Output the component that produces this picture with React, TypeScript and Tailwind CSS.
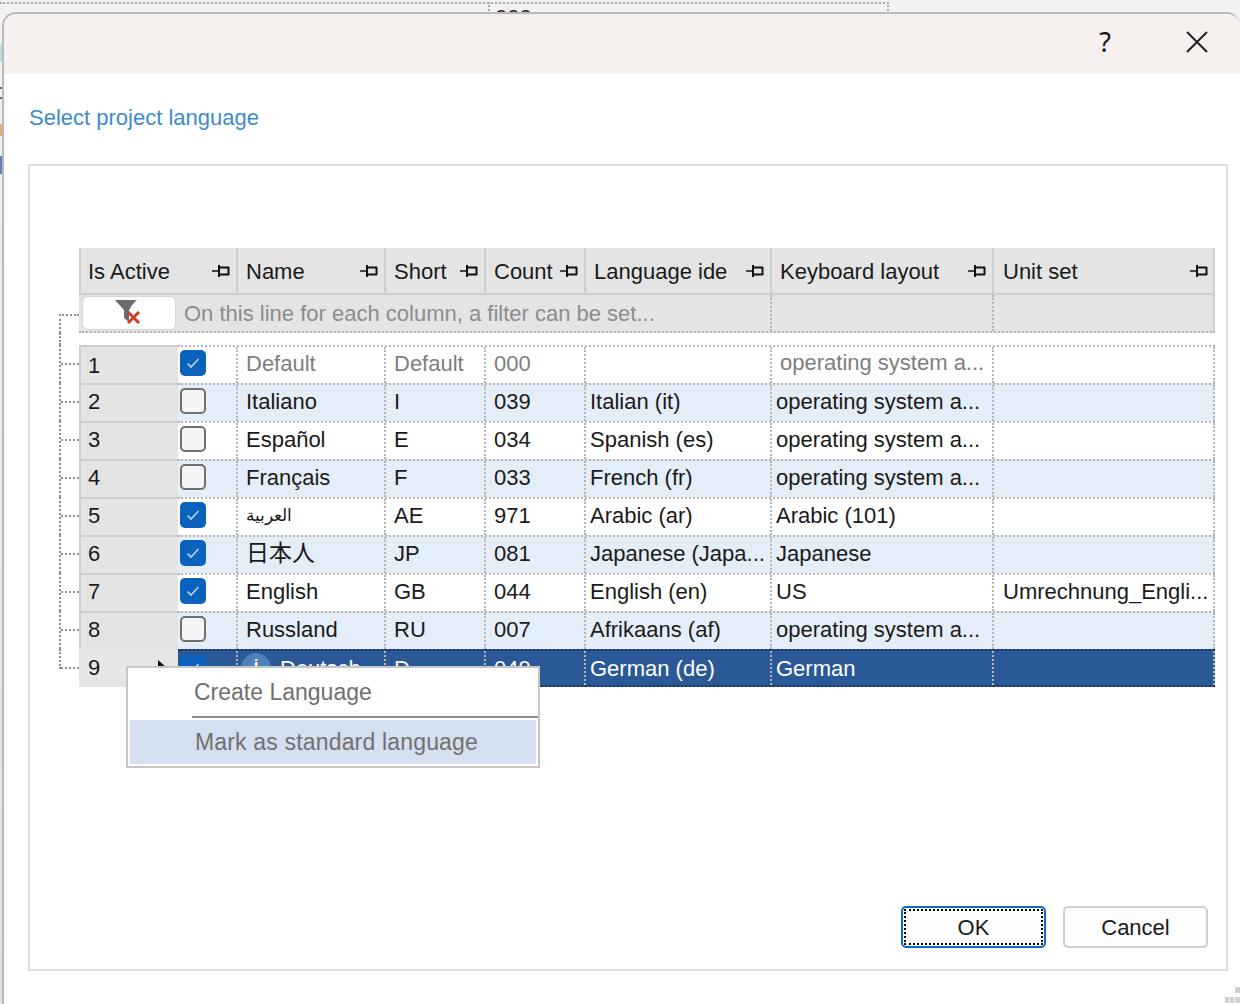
const columns = [
  { label: "Name", width: "w-[148px]", pad: "pl-[8px] pr-[6px]" },
  { label: "Short", width: "w-[100px]", pad: "pl-[8px] pr-[6px]" },
  { label: "Count", width: "w-[100px]", pad: "pl-[8px] pr-[6px]" },
  { label: "Language ide", width: "w-[186px]", pad: "pl-[8px] pr-[6px]" },
  { label: "Keyboard layout", width: "w-[222px]", pad: "pl-[8px] pr-[6px]" },
  { label: "Unit set", width: "w-[221px]", pad: "pl-[9px] pr-[5px]" },
];

const rows = [
  { id: 1, active: true, name: "Default", nameSize: "", short: "Default", count: "000", lang: "", kb: "operating system a...", unit: "", muted: true },
  { id: 2, active: false, name: "Italiano", nameSize: "", short: "I", count: "039", lang: "Italian (it)", kb: "operating system a...", unit: "" },
  { id: 3, active: false, name: "Español", nameSize: "", short: "E", count: "034", lang: "Spanish (es)", kb: "operating system a...", unit: "" },
  { id: 4, active: false, name: "Français", nameSize: "", short: "F", count: "033", lang: "French (fr)", kb: "operating system a...", unit: "" },
  { id: 5, active: true, name: "العربية", nameSize: "text-[17px]", short: "AE", count: "971", lang: "Arabic (ar)", kb: "Arabic (101)", unit: "" },
  { id: 6, active: true, name: "日本人", nameSize: "text-[23px]", short: "JP", count: "081", lang: "Japanese (Japa...", kb: "Japanese", unit: "" },
  { id: 7, active: true, name: "English", nameSize: "", short: "GB", count: "044", lang: "English (en)", kb: "US", unit: "Umrechnung_Engli..." },
  { id: 8, active: false, name: "Russland", nameSize: "", short: "RU", count: "007", lang: "Afrikaans (af)", kb: "operating system a...", unit: "" },
];

function Pin() {
  return (
    <svg width="18" height="12" viewBox="0 0 18 12" className="shrink-0">
      <path d="M0 6H6" stroke="#111" strokeWidth="1.5" fill="none" />
      <path d="M7 0V12M16.5 2V10" stroke="#111" strokeWidth="2" fill="none" />
      <path d="M7 2.5H17M7 9.5H17" stroke="#111" strokeWidth="2" fill="none" />
    </svg>
  );
}

function Check({ on }: { on: boolean }) {
  if (!on) {
    return <div className="w-[26px] h-[26px] rounded-[5px] border-2 border-[#707070] bg-[#f5f5f5]" />;
  }
  return (
    <div className="w-[26px] h-[26px] rounded-[5px] bg-[#0a62bd] flex items-center justify-center">
      <svg width="14" height="12" viewBox="0 0 14 12">
        <path d="M1.5 6.5L5 10L12.5 2" stroke="#b9d3ef" strokeWidth="1.6" fill="none" />
      </svg>
    </div>
  );
}

function Stub({ last }: { last?: boolean }) {
  return (
    <div className={`w-[20px] shrink-0 border-l-2 border-dotted border-[#8f8f8f] ${last ? "h-[20px] self-start" : "self-stretch"}`}>
      <div className="h-[20px] border-b-2 border-dotted border-[#8f8f8f]" />
    </div>
  );
}

function Cell({ width, className, children }: { width: string; className: string; children?: React.ReactNode }) {
  return (
    <div className={`${width} shrink-0 h-full border-r-2 border-dotted border-[#b5b5b5] flex items-center whitespace-nowrap overflow-hidden ${className}`}>
      {children}
    </div>
  );
}

export default function App() {
  return (
    <div className="relative w-[1240px] h-[1004px] overflow-hidden bg-linear-to-b from-[#f2f2f2] to-[#e2e2e2] pt-[12px] pl-[2px] font-['Liberation_Sans',sans-serif] text-[22px] text-[#1a1a1a]">
      {/* what is left of the window behind the dialog */}
      <div className="absolute left-0 top-[2px] w-[889px] h-[12px] border-t-2 border-r-2 border-dotted border-[#a8a8a8]" />
      <div className="absolute left-[488px] top-[2px] h-[12px] border-l-2 border-dotted border-[#a8a8a8]" />
      <div className="absolute left-[495px] top-[7px] leading-[22px]">000</div>
      <div className="absolute left-0 top-[44px] w-[2px] h-[18px] bg-[#b6e0e0]" />
      <div className="absolute left-0 top-[87px] w-[2px] h-[2px] bg-[#666666]" />
      <div className="absolute left-0 top-[97px] w-[2px] h-[2px] bg-[#666666]" />
      <div className="absolute left-0 top-[124px] w-[2px] h-[12px] bg-[#e3b07a]" />
      <div className="absolute left-0 top-[156px] w-[2px] h-[18px] bg-[#5f7fb5]" />

      <div className="relative h-[992px] w-[1238px] rounded-t-[14px] border-t-2 border-l-2 border-[#b9b9b9] bg-white flex flex-col overflow-hidden">
        <div className="h-[60px] shrink-0 pb-[4px] bg-[#f6f0ef] flex items-center justify-end">
          <span className="mr-[75px] font-['Noto_Sans',sans-serif] text-[27px] text-[#111]">?</span>
          <svg width="22" height="22" viewBox="0 0 22 22" className="mr-[32px]">
            <path d="M1 1L21 21M21 1L1 21" stroke="#222" strokeWidth="2" />
          </svg>
        </div>

        <div className="pl-[25px] pt-[28px] h-[90px] shrink-0 text-[#3f8bc9] leading-[32px]">Select project language</div>

        <div className="ml-[24px] w-[1200px] h-[807px] border-2 border-[#dedede] pt-[82px]">
          <div className="flex ml-[49px]">
            <div className="w-[159px] h-[47px] bg-[#e4e4e4] border-r-2 border-b-2 border-l-2 border-[#cfcfcf] flex items-center justify-between pl-[7px] pr-[6px] pt-[1px]">
              Is Active <Pin />
            </div>
            {columns.map((c) => (
              <div key={c.label} className={`${c.width} ${c.pad} h-[47px] bg-[#e4e4e4] border-r-2 border-b-2 border-[#cfcfcf] flex items-center justify-between pt-[1px] whitespace-nowrap`}>
                {c.label} <Pin />
              </div>
            ))}
          </div>

          <div className="flex ml-[29px]">
            <div className="w-[20px] shrink-0 mt-[19px] border-l-2 border-t-2 border-dotted border-[#8f8f8f]" />
            <div className="flex h-[38px] bg-[#e4e4e4] border-b-2 border-dotted border-[#b5b5b5]">
              <div className="w-[99px] pl-[3px] pr-[2px] py-[1px] shrink-0">
                <div className="h-[34px] rounded-[6px] border border-[#d6d6d6] bg-white flex items-center justify-center">
                  <svg width="28" height="26" viewBox="0 0 28 26" className="mb-[2px] ml-[-2px]">
                    <path d="M1 1H23L15 11V23L10 19V11Z" fill="#6b6b6b" />
                    <path d="M17 9L23 2" stroke="#fff" strokeWidth="2" />
                    <path d="M14 13L25 24M25 13L14 24" stroke="#d23a2c" strokeWidth="3" />
                  </svg>
                </div>
              </div>
              <div className="w-[594px] shrink-0 border-r-2 border-dotted border-[#b5b5b5] pl-[6px] flex items-center text-[#8c8c8c] whitespace-nowrap">
                On this line for each column, a filter can be set...
              </div>
              <div className="w-[222px] shrink-0 border-r-2 border-dotted border-[#b5b5b5]" />
              <div className="w-[221px] shrink-0 border-r-2 border-[#cfcfcf]" />
            </div>
          </div>

          <div className="flex ml-[29px] h-[12px]">
            <div className="border-l-2 border-dotted border-[#8f8f8f]" />
          </div>

          {rows.map((r, i) => (
            <div key={r.id} className="flex ml-[29px] h-[38px]">
              <Stub />
              <div className={`w-[99px] shrink-0 bg-[#e4e4e4] border-t-2 border-l-2 border-[#cfcfcf] pl-[7px] flex items-center ${r.muted ? "" : "pb-[3px]"}`}>{r.id}</div>
              <div className={`flex border-t-2 border-dotted border-[#b5b5b5] ${r.muted ? "text-[#7e7e7e]" : ""} ${i % 2 ? "bg-[#e3eef9]" : "bg-white"}`}>
                <div className="w-[60px] h-full shrink-0 border-r-2 border-dotted border-[#b5b5b5] pl-[2px] pb-[4px] flex items-center">
                  <Check on={r.active} />
                </div>
                <Cell width="w-[148px]" className="pl-[8px] pb-[3px]">
                  <span className={`font-['Liberation_Sans','Noto_Sans_CJK_JP',sans-serif] ${r.nameSize}`}>{r.name}</span>
                </Cell>
                <Cell width="w-[100px]" className="pl-[8px] pb-[3px]">{r.short}</Cell>
                <Cell width="w-[100px]" className="pl-[8px] pb-[3px]">{r.count}</Cell>
                <Cell width="w-[186px]" className="pl-[4px] pb-[3px]">{r.lang}</Cell>
                <Cell width="w-[222px]" className={r.muted ? "pl-[8px] pb-[5px]" : "pl-[4px] pb-[3px]"}>{r.kb}</Cell>
                <Cell width="w-[221px]" className="pl-[9px] pb-[3px]">{r.unit}</Cell>
              </div>
            </div>
          ))}

          <div className="flex ml-[29px] h-[38px]">
            <Stub last />
            <div className="w-[99px] shrink-0 bg-[#e6e6e6] pl-[9px] pb-[1px] flex items-center relative">
              9
              <svg width="8" height="13" viewBox="0 0 8 13" className="absolute left-[79px] top-[11px]">
                <path d="M0 0L8 7L0 13Z" fill="#111" />
              </svg>
            </div>
            <div className="flex bg-[#2b5997] text-white border-t-2 border-b-2 border-dotted border-[#16325a]">
              <div className="w-[60px] h-full shrink-0 border-r-2 border-dotted border-[#b5b5b5] pl-[2px] flex items-center">
                <Check on />
              </div>
              <Cell width="w-[148px]" className="pl-[3px] gap-[9px]">
                <div className="w-[30px] h-[30px] rounded-full bg-[#4f80ba] text-center text-[17px] font-bold leading-[26px]">i</div>
                Deutsch
              </Cell>
              <Cell width="w-[100px]" className="pl-[8px]">D</Cell>
              <Cell width="w-[100px]" className="pl-[8px]">049</Cell>
              <Cell width="w-[186px]" className="pl-[4px]">German (de)</Cell>
              <Cell width="w-[222px]" className="pl-[4px]">German</Cell>
              <Cell width="w-[221px]" className="pl-[9px]" />
            </div>
          </div>

          <div className="mt-[219px] flex justify-end pr-[18px] gap-[17px]">
            <button className="w-[145px] h-[42px] rounded-[5px] border-2 border-[#0a6cc4] bg-[#fdfdfd] p-[1px]">
              <div className="h-full border-2 border-dotted border-black flex items-center justify-center">OK</div>
            </button>
            <button className="w-[145px] h-[42px] rounded-[5px] border-2 border-[#d0d0d0] bg-[#fdfdfd]">Cancel</button>
          </div>
        </div>

        {/* context menu */}
        <div className="absolute left-[122px] top-[652px] w-[414px] h-[102px] border-2 border-[#c6c6c6] bg-white text-[23px] text-[#707070]">
          <div className="h-[50px] ml-[64px] border-b-2 border-[#8f8f8f] pl-[2px] flex items-center">Create Language</div>
          <div className="mt-[2px] h-[44px] mx-[2px] bg-[#d4dff0] pl-[65px] tracking-[0.17px] flex items-center">Mark as standard language</div>
        </div>

        <svg width="15" height="17" viewBox="0 0 15 17" className="absolute right-0 bottom-0">
          <path d="M10 0h5v6h-5zM0 10h4v6H0zM5 10h4v6H5zM10 10h5v6h-5z" fill="#d0d0d0" />
        </svg>
      </div>
    </div>
  );
}
